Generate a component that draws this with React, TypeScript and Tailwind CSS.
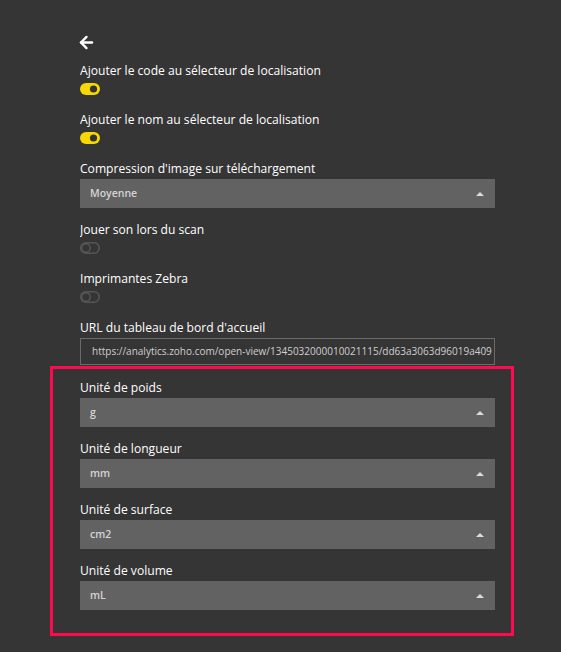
import { ArrowLeft } from 'lucide-react';

const font = { fontFamily: '"Open Sans", "Noto Sans", sans-serif' };

function Toggle({ on }: { on: boolean }) {
  return (
    <div className="h-[18px] flex items-center">
      {on ? (
        <svg width="20" height="12" viewBox="0 0 20 12">
          <rect x="0" y="0" width="20" height="12" rx="6" fill="#f7d800" />
          <circle cx="13.5" cy="6" r="3.6" fill="#333" />
        </svg>
      ) : (
        <svg width="20" height="12" viewBox="0 0 20 12">
          <rect x="0.75" y="0.75" width="18.5" height="10.5" rx="5.25" fill="none" stroke="#565656" strokeWidth="1.5" />
          <circle cx="6" cy="6" r="4.3" fill="none" stroke="#565656" strokeWidth="1.5" />
        </svg>
      )}
    </div>
  );
}

function Select({ value }: { value: string }) {
  return (
    <div className="h-[29px] w-[415px] bg-[#626262] flex items-center justify-between pl-[10px] pr-[11px]">
      <span className="text-[10.5px] font-semibold text-[#d4d4d4]">{value}</span>
      <svg width="8" height="5" viewBox="0 0 8 5">
        <path d="M0 5 L4 1 L8 5 Z" fill="#dcdcdc" />
      </svg>
    </div>
  );
}

function Label({ children }: { children: string }) {
  return <div className="h-[20px] leading-[22px] text-[12.1px] text-white mb-[1px] overflow-hidden">{children}</div>;
}

export default function App() {
  return (
    <div className="min-h-[652px] w-full bg-[#353535] pl-[50px] pt-[34px]" style={font}>
      <div className="ml-[30px] w-[415px]">
        <div className="h-[17px] flex items-center mb-[9px] -ml-[3px]">
          <ArrowLeft size={19} strokeWidth={3} color="#fff" />
        </div>

        <Label>Ajouter le code au sélecteur de localisation</Label>
        <div className="mt-[-1px] mb-[11px]"><Toggle on /></div>

        <Label>Ajouter le nom au sélecteur de localisation</Label>
        <div className="mt-[-1px] mb-[11px]"><Toggle on /></div>

        <Label>Compression d'image sur téléchargement</Label>
        <div className="mb-[11px]"><Select value="Moyenne" /></div>

        <Label>Jouer son lors du scan</Label>
        <div className="mt-[-1px] mb-[11px]"><Toggle on={false} /></div>

        <Label>Imprimantes Zebra</Label>
        <div className="mt-[-1px] mb-[11px]"><Toggle on={false} /></div>

        <Label>URL du tableau de bord d'accueil</Label>
        <div className="h-[27px] w-[415px] border border-[#6a6a6a] flex items-center pl-[11px] overflow-hidden whitespace-nowrap">
          <span className="text-[10px] text-[#cfcfcf]">https://analytics.zoho.com/open-view/1345032000010021115/dd63a3063d96019a409</span>
        </div>
      </div>

      <div className="mt-[1px] w-[464px] border-[3px] border-[#ff0a4f] px-[27px] pt-[8px] pb-[23px]">
        <Label>Unité de poids</Label>
        <div className="mb-[11px]"><Select value="g" /></div>
        <Label>Unité de longueur</Label>
        <div className="mb-[11px]"><Select value="mm" /></div>
        <Label>Unité de surface</Label>
        <div className="mb-[11px]"><Select value="cm2" /></div>
        <Label>Unité de volume</Label>
        <Select value="mL" />
      </div>
    </div>
  );
}
